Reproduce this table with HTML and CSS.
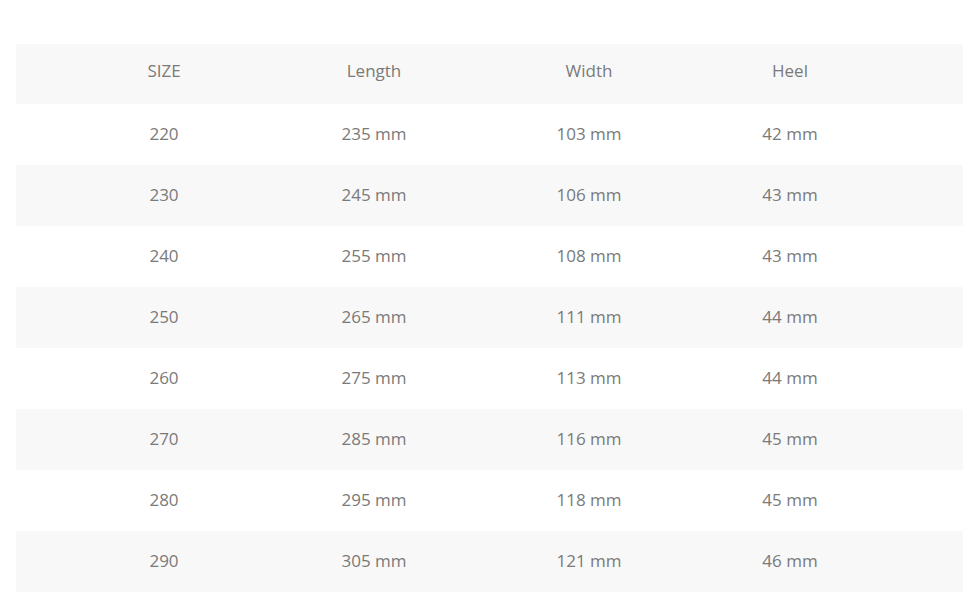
FILE: index.html
```html
<!DOCTYPE html>
<html>
<head>
<meta charset="utf-8">
<link rel="stylesheet" href="styles.css">
</head>
<body>
<div class="chart">
  <div class="row head stripe"><span>SIZE</span><span>Length</span><span>Width</span><span>Heel</span></div>
  <div class="row"><span>220</span><span>235 mm</span><span>103 mm</span><span>42 mm</span></div>
  <div class="row stripe"><span>230</span><span>245 mm</span><span>106 mm</span><span>43 mm</span></div>
  <div class="row"><span>240</span><span>255 mm</span><span>108 mm</span><span>43 mm</span></div>
  <div class="row stripe"><span>250</span><span>265 mm</span><span>111 mm</span><span>44 mm</span></div>
  <div class="row"><span>260</span><span>275 mm</span><span>113 mm</span><span>44 mm</span></div>
  <div class="row stripe"><span>270</span><span>285 mm</span><span>116 mm</span><span>45 mm</span></div>
  <div class="row"><span>280</span><span>295 mm</span><span>118 mm</span><span>45 mm</span></div>
  <div class="row stripe"><span>290</span><span>305 mm</span><span>121 mm</span><span>46 mm</span></div>
</div>
</body>
</html>
```
FILE: styles.css
```css
html, body {
  margin: 0;
  padding: 0;
  background: #ffffff;
}
body {
  font-family: "Open Sans", "Noto Sans", sans-serif;
  font-size: 17px;
  color: #7a7a7a;
}
.chart {
  margin: 44px 0 0 16px;
  width: 947px;
  display: flex;
  flex-direction: column;
}
.row {
  display: grid;
  grid-template-columns: 210px 210px 220px 182px;
  padding-left: 43px;
  height: 61px;
  align-items: center;
  text-align: center;
}
.row.head {
  height: 60px;
  padding-bottom: 6px;
  box-sizing: border-box;
}
.row span {
  display: block;
  padding-bottom: 2px;
}
.stripe {
  background: #f8f8f8;
}
```
